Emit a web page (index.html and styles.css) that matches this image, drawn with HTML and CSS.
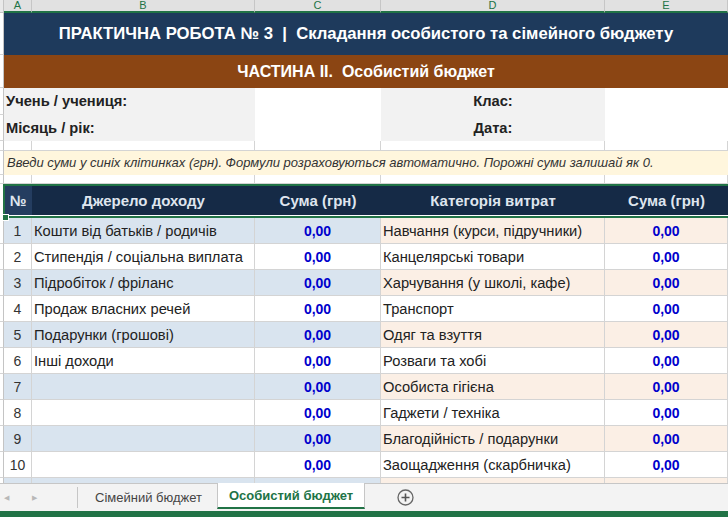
FILE: index.html
```html
<!DOCTYPE html>
<html lang="uk">
<head>
  <meta charset="UTF-8">
  <title>Особистий бюджет</title>
  <link rel="stylesheet" href="styles.css">
</head>
<body>
<div class="sheet">
  <div class="row colhead">
    <div class="stub"></div>
    <div>A</div><div>B</div><div>C</div><div>D</div><div>E</div>
  </div>

  <div class="row title">
    <div class="stub"></div>
    <div class="merged">ПРАКТИЧНА РОБОТА № 3&nbsp; | &nbsp;Складання особистого та сімейного бюджету</div>
  </div>
  <div class="row subtitle">
    <div class="stub"></div>
    <div class="merged">ЧАСТИНА II.&nbsp; Особистий бюджет</div>
  </div>

  <div class="row info first">
    <div class="stub"></div>
    <div class="label wide">Учень / учениця:</div>
    <div class="field"></div>
    <div class="label center">Клас:</div>
    <div class="field"></div>
  </div>
  <div class="row info">
    <div class="stub"></div>
    <div class="label wide">Місяць / рік:</div>
    <div class="field"></div>
    <div class="label center">Дата:</div>
    <div class="field"></div>
  </div>

  <div class="row blank gap1">
    <div class="stub"></div><div></div><div></div><div></div><div></div><div></div>
  </div>
  <div class="row note">
    <div class="stub"></div>
    <div class="merged">Введи суми у синіх клітинках (грн). Формули розраховуються автоматично. Порожні суми залишай як 0.</div>
  </div>
  <div class="row blank gap2">
    <div class="stub"></div><div></div><div></div><div></div><div></div><div></div>
  </div>

  <div class="row thead">
    <div class="stub"></div>
    <div class="num">№</div>
    <div>Джерело доходу</div>
    <div>Сума (грн)</div>
    <div>Категорія витрат</div>
    <div>Сума (грн)</div>
  </div>

  <div class="row data odd">
    <div class="stub"></div><div class="n">1</div><div class="txt">Кошти від батьків / родичів</div><div class="sum">0,00</div><div class="txt">Навчання (курси, підручники)</div><div class="sum">0,00</div>
  </div>
  <div class="row data">
    <div class="stub"></div><div class="n">2</div><div class="txt">Стипендія / соціальна виплата</div><div class="sum">0,00</div><div class="txt">Канцелярські товари</div><div class="sum">0,00</div>
  </div>
  <div class="row data odd">
    <div class="stub"></div><div class="n">3</div><div class="txt">Підробіток / фріланс</div><div class="sum">0,00</div><div class="txt">Харчування (у школі, кафе)</div><div class="sum">0,00</div>
  </div>
  <div class="row data">
    <div class="stub"></div><div class="n">4</div><div class="txt">Продаж власних речей</div><div class="sum">0,00</div><div class="txt">Транспорт</div><div class="sum">0,00</div>
  </div>
  <div class="row data odd">
    <div class="stub"></div><div class="n">5</div><div class="txt">Подарунки (грошові)</div><div class="sum">0,00</div><div class="txt">Одяг та взуття</div><div class="sum">0,00</div>
  </div>
  <div class="row data">
    <div class="stub"></div><div class="n">6</div><div class="txt">Інші доходи</div><div class="sum">0,00</div><div class="txt">Розваги та хобі</div><div class="sum">0,00</div>
  </div>
  <div class="row data odd">
    <div class="stub"></div><div class="n">7</div><div class="txt"></div><div class="sum">0,00</div><div class="txt">Особиста гігієна</div><div class="sum">0,00</div>
  </div>
  <div class="row data">
    <div class="stub"></div><div class="n">8</div><div class="txt"></div><div class="sum">0,00</div><div class="txt">Гаджети / техніка</div><div class="sum">0,00</div>
  </div>
  <div class="row data odd">
    <div class="stub"></div><div class="n">9</div><div class="txt"></div><div class="sum">0,00</div><div class="txt">Благодійність / подарунки</div><div class="sum">0,00</div>
  </div>
  <div class="row data">
    <div class="stub"></div><div class="n">10</div><div class="txt"></div><div class="sum">0,00</div><div class="txt">Заощадження (скарбничка)</div><div class="sum">0,00</div>
  </div>
  <div class="row data odd cut">
    <div class="stub"></div><div class="n"></div><div class="txt"></div><div class="sum"></div><div class="txt"></div><div class="sum"></div>
  </div>
</div>

<div class="tabs">
  <div class="arrows">
    <span class="arrow">&#9664;</span>
    <span class="arrow">&#9654;</span>
  </div>
  <div class="tab">Сімейний бюджет</div>
  <div class="tab active">Особистий бюджет</div>
  <div class="add">
    <svg width="17" height="17" viewBox="0 0 17 17">
      <circle cx="8.5" cy="8.5" r="7.5" fill="none" stroke="#666" stroke-width="1.3"/>
      <path d="M8.5 4.5v8M4.5 8.5h8" stroke="#555" stroke-width="1.6"/>
    </svg>
  </div>
</div>
<div class="status"></div>
</body>
</html>
```

FILE: styles.css
```css
body{
  margin: 0;
  width: 728px;
  height: 517px;
  overflow: hidden;
  font-family: "Liberation Sans", Arial, sans-serif;
  background-color: #fff;
}
.sheet{
  height: 483px;
  overflow: hidden;
}
.row{
  display: grid;
  grid-template-columns: 4px 28px 223px 126px 224px 123px;
}
.row > div{
  box-sizing: border-box;
  border-right: 1px solid #d4d4d4;
  border-bottom: 1px solid #d4d4d4;
  white-space: nowrap;
  overflow: hidden;
}
.row > .stub{
  background-color: #fff;
  border-right: 1px solid #c4c4c4;
}
.merged{
  grid-column: 2 / -1;
}

/* column letters */
.colhead{
  height: 13px;
}
.colhead > div{
  background-color: #e1e1e1;
  color: #217346;
  font-size: 11px;
  line-height: 11px;
  text-align: center;
  border-right: 1px solid #c6c6c6;
  border-bottom: 2px solid #217346;
}
.colhead > .stub{
  background-color: #e9e9e9;
  border-bottom: 1px solid #c6c6c6;
}

/* headings */
.title{
  height: 42px;
}
.title .merged{
  background-color: #1e3a5c;
  color: #fff;
  font-weight: bold;
  font-size: 16.7px;
  line-height: 42px;
  text-align: center;
  border: none;
}
.subtitle{
  height: 33px;
}
.subtitle .merged{
  background-color: #8b4513;
  color: #fff;
  font-weight: bold;
  font-size: 16px;
  line-height: 33px;
  text-align: center;
  border: none;
}

/* student info */
.info{
  height: 26px;
}
.info.first{
  height: 27px;
}
.info > div{
  border: none;
  font-size: 14.7px;
  font-weight: bold;
  color: #222;
  line-height: 26px;
}
.info > .stub{
  border-right: 1px solid #c4c4c4;
  border-bottom: 1px solid #d4d4d4;
}
.info .label{
  background-color: #f2f2f2;
}
.info .wide{
  grid-column: 2 / 4;
  padding-left: 2px;
}
.info .center{
  text-align: center;
}
.info .field{
  background-color: #fff;
}

.gap1{
  height: 10px;
}
.gap2{
  height: 9px;
}
.note{
  height: 24px;
}
.note .merged{
  background-color: #fff6dd;
  color: #333;
  font-style: italic;
  font-size: 13px;
  line-height: 24px;
  padding-left: 3px;
  border: none;
}

/* income / expense table */
.thead{
  height: 34px;
  position: relative;
}
.thead > div{
  background-color: #152a46;
  color: #dfe5ee;
  font-weight: bold;
  font-size: 15px;
  line-height: 34px;
  text-align: center;
  border: none;
}
.thead > .stub{
  background-color: #fff;
}
.thead > .num{
  background-color: #243d60;
}
.thead::after{
  content: "";
  position: absolute;
  left: 3px;
  right: -3px;
  top: 0;
  bottom: 0;
  border: 2px solid #217346;
  box-shadow: inset 0 -1px 0 #fff;
}
.thead::before{
  content: "";
  position: absolute;
  left: 2px;
  bottom: -3px;
  width: 5px;
  height: 5px;
  background-color: #217346;
  border: 1px solid #fff;
  z-index: 2;
}

.data{
  height: 26px;
}
.data > div{
  font-size: 14.7px;
  line-height: 25px;
  padding-top: 1px;
  color: #222;
}
.data .n{
  text-align: center;
  color: #333;
  font-size: 14px;
}
.data .txt{
  padding-left: 2px;
}
.data .sum{
  text-align: center;
  font-weight: bold;
  font-size: 14px;
  color: #0000cc;
}
.data.odd > div:nth-child(2),
.data.odd > div:nth-child(3),
.data.odd > div:nth-child(4){
  background-color: #d9e4ef;
}
.data.odd > div:nth-child(5),
.data.odd > div:nth-child(6){
  background-color: #fbefe5;
}

/* sheet tabs */
.tabs{
  height: 27px;
  background-color: #f3f3f3;
  border-top: 1px solid #c6c6c6;
  display: flex;
  align-items: stretch;
  font-size: 13px;
}
.arrows{
  width: 78px;
  display: flex;
  align-items: center;
  gap: 23px;
  padding-left: 4px;
  box-sizing: border-box;
  border-right: 1px solid #c6c6c6;
  margin: 3px 0;
}
.arrow{
  color: #b8b8b8;
  font-size: 7px;
}
.tab{
  display: flex;
  align-items: center;
  padding: 0 15px 0 17px;
  color: #444;
}
.tab.active{
  background-color: #fff;
  color: #217346;
  font-weight: bold;
  padding: 0 11px 0 11px;
  border-left: 1px solid #c6c6c6;
  border-right: 1px solid #c6c6c6;
  border-bottom: 2px solid #217346;
  margin-bottom: 2px;
  margin-top: -1px;
}
.add{
  display: flex;
  align-items: center;
  padding-left: 32px;
}
.status{
  height: 6px;
  background-color: #217346;
}
```
